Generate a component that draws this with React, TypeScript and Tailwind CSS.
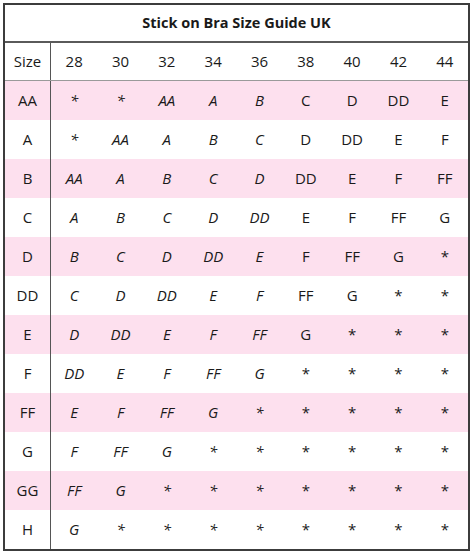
const sizes = ["28", "30", "32", "34", "36", "38", "40", "42", "44"];

const rows: [string, string[]][] = [
  ["AA", ["*", "*", "AA", "A", "B", "C", "D", "DD", "E"]],
  ["A", ["*", "AA", "A", "B", "C", "D", "DD", "E", "F"]],
  ["B", ["AA", "A", "B", "C", "D", "DD", "E", "F", "FF"]],
  ["C", ["A", "B", "C", "D", "DD", "E", "F", "FF", "G"]],
  ["D", ["B", "C", "D", "DD", "E", "F", "FF", "G", "*"]],
  ["DD", ["C", "D", "DD", "E", "F", "FF", "G", "*", "*"]],
  ["E", ["D", "DD", "E", "F", "FF", "G", "*", "*", "*"]],
  ["F", ["DD", "E", "F", "FF", "G", "*", "*", "*", "*"]],
  ["FF", ["E", "F", "FF", "G", "*", "*", "*", "*", "*"]],
  ["G", ["F", "FF", "G", "*", "*", "*", "*", "*", "*"]],
  ["GG", ["FF", "G", "*", "*", "*", "*", "*", "*", "*"]],
  ["H", ["G", "*", "*", "*", "*", "*", "*", "*", "*"]],
];

const App = () => {
  return (
    <div className="w-[474px] h-[557px] bg-white pt-[3px] pl-[3px]" style={{ fontFamily: '"Open Sans", sans-serif' }}>
      <div className="w-[467px] border-2 border-[#3c3c3c] text-[#1a1a1a] text-[15px]">
        <div className="h-[38px] flex items-center justify-center font-bold text-[14.5px] border-b-2 border-[#5a5a5a]">
          Stick on Bra Size Guide UK
        </div>
        <div className="flex h-[38px] items-center border-b border-[#9a9a9a]">
          <div className="w-[46px] h-full flex items-center justify-center border-r border-[#555]">Size</div>
          {sizes.map((s) => (
            <div key={s} className="flex-1 text-center">{s}</div>
          ))}
        </div>
        {rows.map(([cup, cells], i) => (
          <div key={cup} className={`flex h-[39px] items-center ${i % 2 === 0 ? "bg-[#fde0ee]" : "bg-white"}`}>
            <div className="w-[46px] h-full flex items-center justify-center border-r border-[#555]">{cup}</div>
            {cells.map((c, j) => (
              <div key={j} className={`flex-1 text-center ${j < 5 ? "italic" : ""}`}>{c}</div>
            ))}
          </div>
        ))}
      </div>
    </div>
  );
};

export default App;
